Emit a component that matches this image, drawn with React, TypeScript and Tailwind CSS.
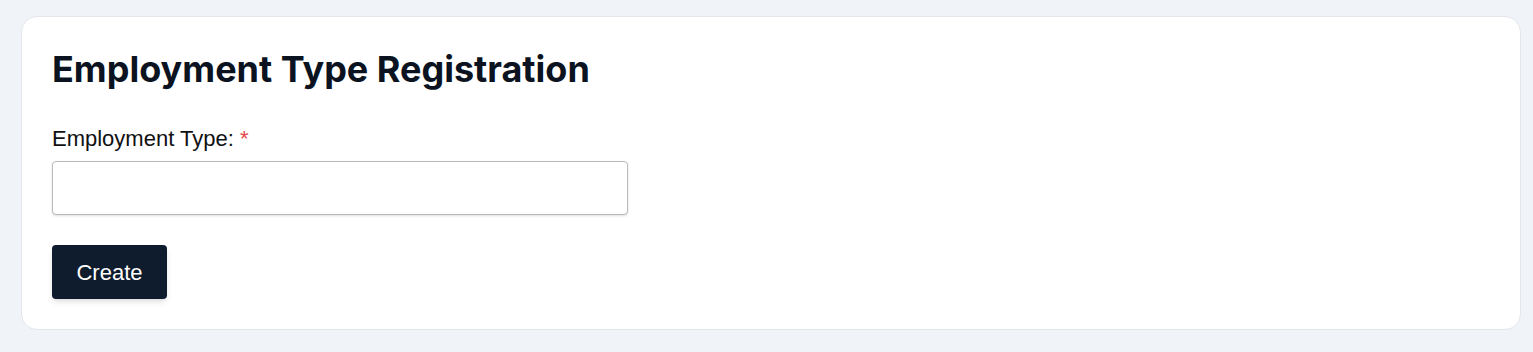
export default function App() {
  return (
    <div
      className="min-h-screen bg-[#f0f3f8] pt-4 pr-[12px] pb-[22px] pl-[21px]"
      style={{ fontFamily: "Inter, 'Noto Sans', sans-serif" }}
    >
      <div className="rounded-2xl border border-[#e3e6eb] bg-white px-[30px] pt-8 pb-[30px]">
        <h1 className="text-4xl leading-10 font-bold text-[#0b1220]">
          Employment Type Registration
        </h1>

        <form className="mt-[36px]" onSubmit={(e) => e.preventDefault()}>
          <label className="block font-['Liberation_Sans',Arial,sans-serif] text-[22px] leading-7 text-[#111]">
            Employment Type: <span className="text-[#e5484d]">*</span>
          </label>
          <input
            type="text"
            className="mt-2 block h-[54px] w-[576px] rounded border border-[#b8b8be] bg-white px-3 shadow-sm outline-none"
          />
          <button
            type="submit"
            className="mt-[30px] h-[54px] w-[115px] rounded bg-[#0e1c2d] font-['Liberation_Sans',Arial,sans-serif] text-[22px] text-white shadow-md"
          >
            Create
          </button>
        </form>
      </div>
    </div>
  );
}
